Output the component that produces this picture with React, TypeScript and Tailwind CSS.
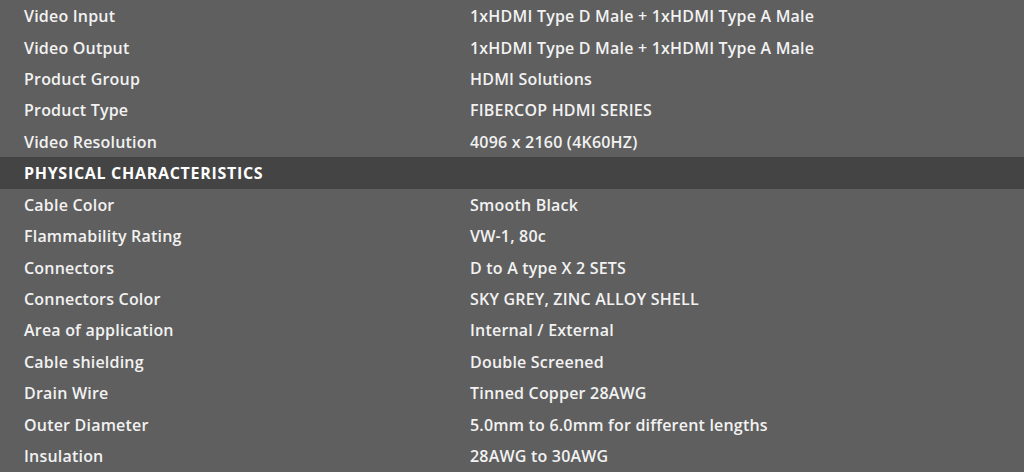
import React from 'react';

interface SpecRow {
  label: string;
  value?: string;
  heading?: boolean;
}

const rows: SpecRow[] = [
  { label: 'Video Input', value: '1xHDMI Type D Male + 1xHDMI Type A Male' },
  { label: 'Video Output', value: '1xHDMI Type D Male + 1xHDMI Type A Male' },
  { label: 'Product Group', value: 'HDMI Solutions' },
  { label: 'Product Type', value: 'FIBERCOP HDMI SERIES' },
  { label: 'Video Resolution', value: '4096 x 2160 (4K60HZ)' },
  { label: 'PHYSICAL CHARACTERISTICS', heading: true },
  { label: 'Cable Color', value: 'Smooth Black' },
  { label: 'Flammability Rating', value: 'VW-1, 80c' },
  { label: 'Connectors', value: 'D to A type X 2 SETS' },
  { label: 'Connectors Color', value: 'SKY GREY, ZINC ALLOY SHELL' },
  { label: 'Area of application', value: 'Internal / External' },
  { label: 'Cable shielding', value: 'Double Screened' },
  { label: 'Drain Wire', value: 'Tinned Copper 28AWG' },
  { label: 'Outer Diameter', value: '5.0mm to 6.0mm for different lengths' },
  { label: 'Insulation', value: '28AWG to 30AWG' },
];

const App = () => {
  return (
    <div className="w-[1024px] h-[472px] overflow-hidden bg-[#5f5f5f] text-[#f2f2f2] font-['Open_Sans',sans-serif] text-[16px] font-semibold tracking-[0.2px]">
      {rows.map((row) =>
        row.heading ? (
          <div key={row.label} className="h-[31.43px] flex items-center px-6 pt-px bg-[#444444] font-bold text-[16px] tracking-[0.7px] text-white">
            {row.label}
          </div>
        ) : (
          <div key={row.label} className="h-[31.43px] grid grid-cols-[446px_1fr] items-center px-6 pt-px">
            <span>{row.label}</span>
            <span>{row.value}</span>
          </div>
        )
      )}
    </div>
  );
};

export default App;
